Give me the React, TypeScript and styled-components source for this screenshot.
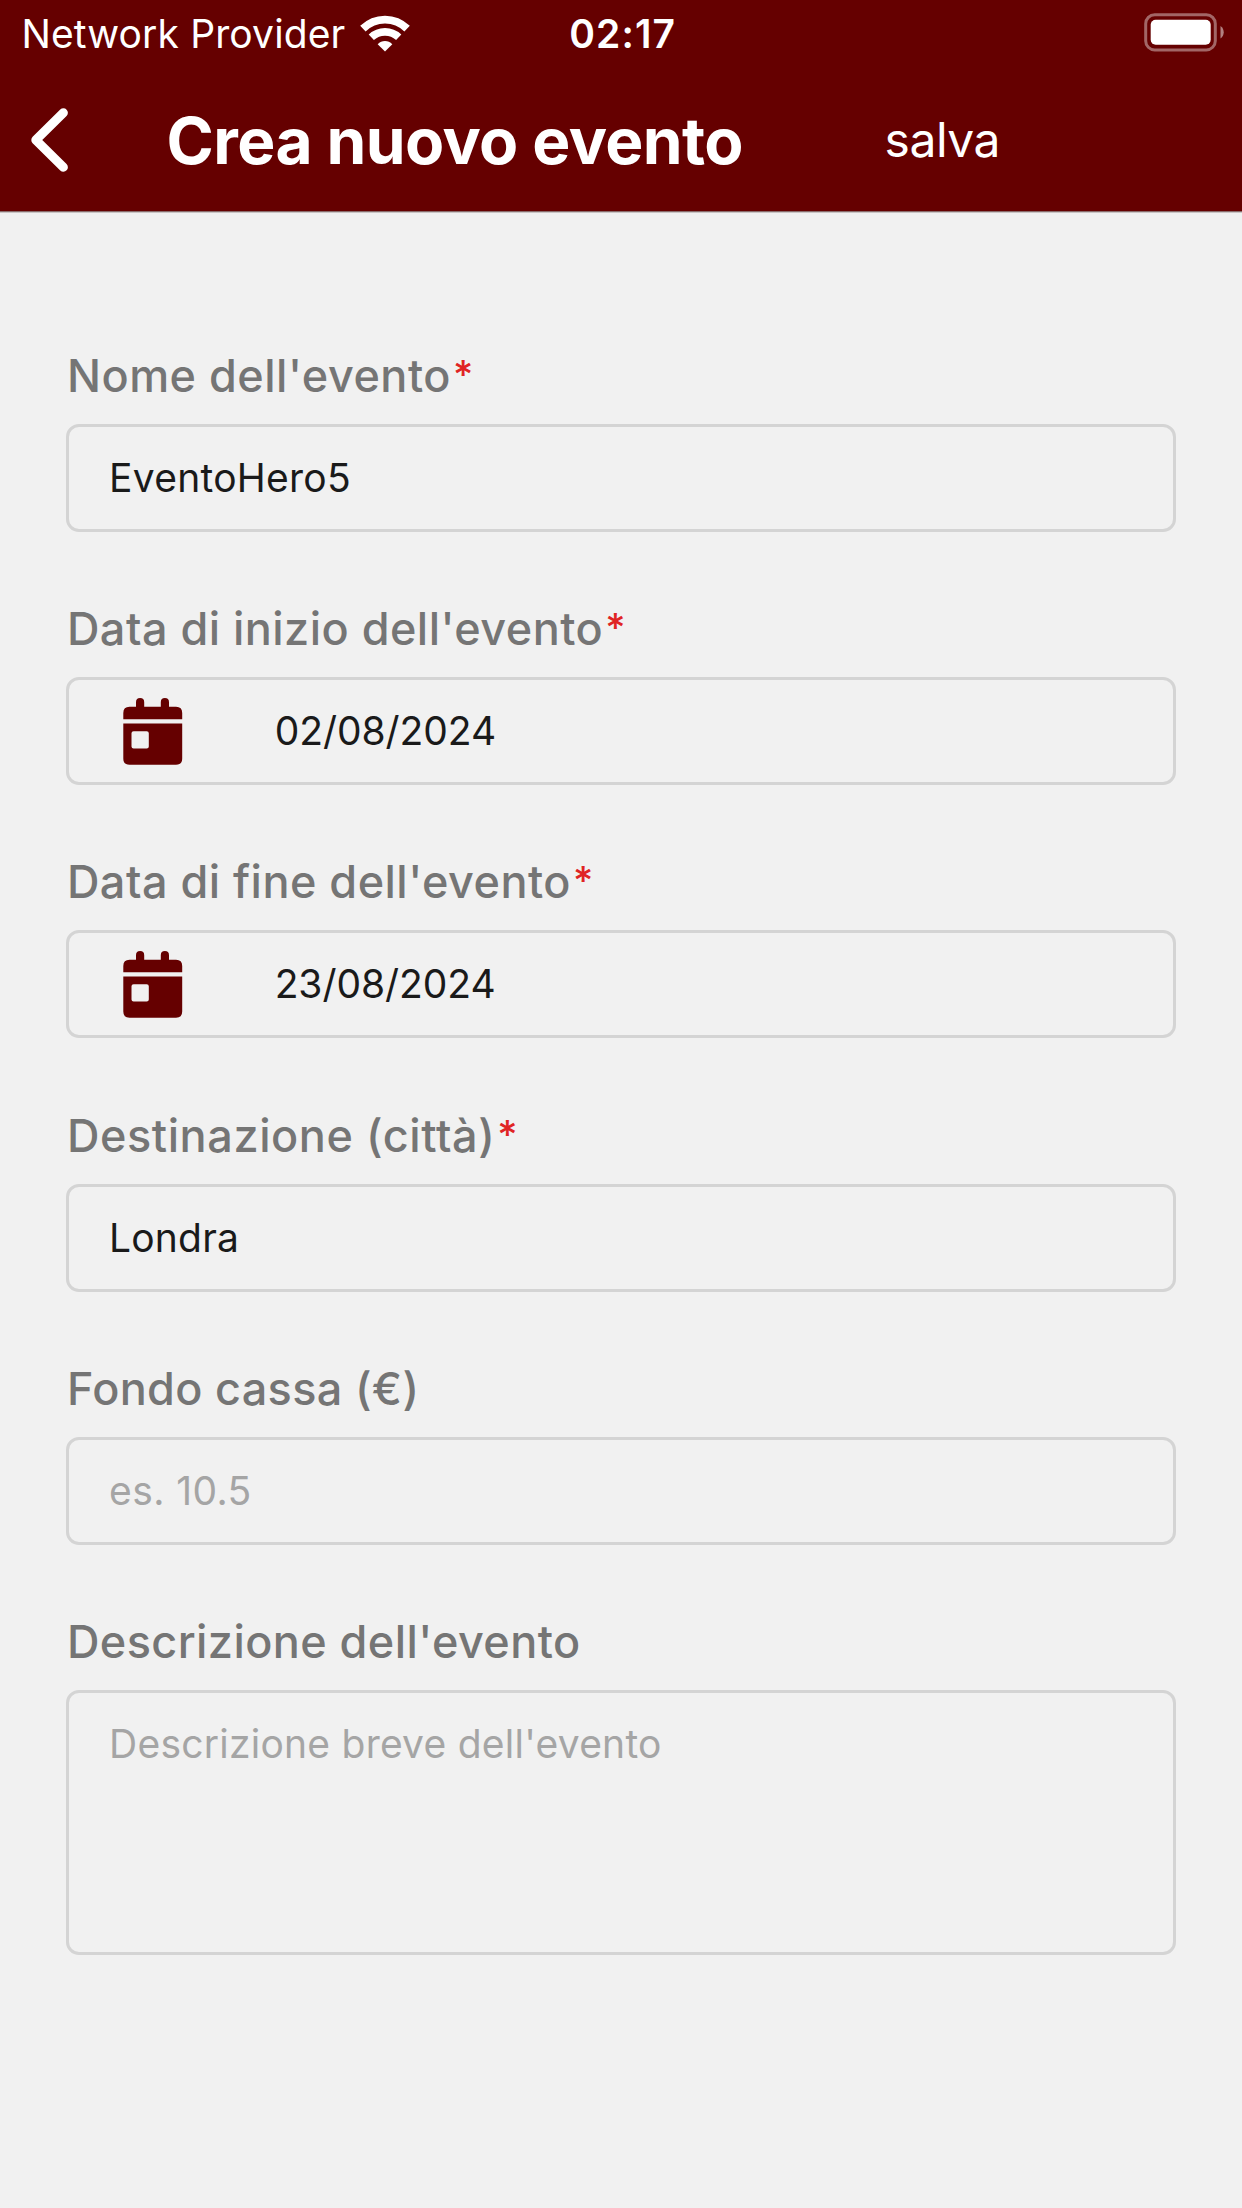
import React from "react";
import styled, { createGlobalStyle, css } from "styled-components";

const color = {
  brand: "#650000",
  page: "#f1f1f1",
  label: "#757575",
  text: "#1a1a1a",
  placeholder: "#a5a5a5",
  border: "#d4d4d4",
  required: "#e02424",
};

const GlobalStyle = createGlobalStyle`
  *, *::before, *::after { box-sizing: border-box; }
  body {
    margin: 0;
    background: ${color.page};
    font-family: Inter, "Liberation Sans", sans-serif;
    -webkit-font-smoothing: antialiased;
  }
`;

const Screen = styled.div`
  width: 1242px;
  min-height: 2208px;
  background: ${color.page};
`;

const Header = styled.header`
  height: 212px;
  background: ${color.brand};
  border-bottom: 1px solid #8a6c6c;
  box-shadow: 0 1px 0 #c9c5c5;
  color: #fff;
`;

const StatusBar = styled.div`
  display: grid;
  grid-template-columns: 1fr auto 1fr;
  align-items: center;
  height: 68px;
  padding: 0 18px 0 21.4px;
  font-size: 39px;
  line-height: 48px;
`;

const Carrier = styled.div`
  display: flex;
  align-items: center;
  gap: 15px;
  letter-spacing: 0.13px;
  white-space: nowrap;

  svg {
    margin-bottom: 1px;
  }
`;

const Clock = styled.time`
  font-weight: 600;
  letter-spacing: 1.1px;
`;

const BatterySlot = styled.div`
  display: flex;
  justify-content: flex-end;
  padding-bottom: 3px;
`;

const NavBar = styled.nav`
  display: flex;
  align-items: center;
  height: 143px;
  padding-left: 30px;
`;

const BackButton = styled.button`
  display: flex;
  width: 136.6px;
  padding: 0;
  border: 0;
  background: none;
`;

const Title = styled.h1`
  width: 718px;
  margin: 0;
  padding-top: 3px;
  font-size: 64px;
  font-weight: 700;
  line-height: 78px;
  letter-spacing: -0.6px;
  white-space: nowrap;
`;

const SaveButton = styled.button`
  padding: 0;
  border: 0;
  background: none;
  color: inherit;
  font: 400 48px/58px Inter, "Liberation Sans", sans-serif;
  letter-spacing: -0.5px;
`;

const Form = styled.form`
  display: flex;
  flex-direction: column;
  gap: 70.2px;
  padding: 137px 66.24px 0;
`;

const FieldGroup = styled.div`
  display: flex;
  flex-direction: column;
  gap: 21px;
`;

const Label = styled.label<{ $tracking: number }>`
  display: flex;
  height: 54px;
  padding-left: 0.7px;
  color: ${color.label};
  font-size: 45px;
  font-weight: 500;
  line-height: 54px;
  letter-spacing: ${(p) => p.$tracking}px;
  white-space: pre;
`;

const Required = styled.span`
  margin-left: 2px;
  color: ${color.required};
  font-size: 39px;
  font-weight: 500;
  line-height: 52px;
`;

const frame = css`
  border: 3px solid ${color.border};
  border-radius: 13px;
`;

const InputBox = styled.div`
  ${frame}
  display: flex;
  align-items: center;
  height: 108px;
  padding-left: 39.8px;
`;

const controlText = css<{ $tracking: number }>`
  border: 0;
  outline: 0;
  background: transparent;
  color: ${color.text};
  font: 400 39px/48px Inter, "Liberation Sans", sans-serif;
  letter-spacing: ${(p) => p.$tracking}px;

  &::placeholder {
    color: ${color.placeholder};
    opacity: 1;
  }
`;

const Input = styled.input<{ $tracking: number }>`
  ${controlText}
  flex: 1;
  min-width: 0;
  height: 48px;
  padding: 0;
`;

const TextArea = styled.textarea<{ $tracking: number }>`
  ${controlText}
  ${frame}
  display: block;
  height: 265px;
  padding: 26.6px 39.8px;
  resize: none;
`;

const CalendarSlot = styled.span`
  display: flex;
  width: 165.6px;
  padding-left: 13.6px;
  padding-top: 1px;
`;

const WifiIcon = () => (
  <svg width="50" height="37" viewBox="0 0 50 37" fill="none">
    <path d="M2.9 13.6C15.3 1.5 34.7 1.5 47.1 13.6" stroke="#fff" strokeWidth="7.8" />
    <path d="M11.3 22.3C19 15 31 15 38.7 22.3" stroke="#fff" strokeWidth="7.6" />
    <path d="M17.7 29.2C21.7 25 28.3 25 32.3 29.2L25 36.6Z" fill="#fff" />
  </svg>
);

const BatteryIcon = () => (
  <svg width="80" height="39" viewBox="0 0 80 39" fill="none">
    <rect x="1.7" y="1.7" width="69.6" height="35.2" rx="9" stroke="#fff" strokeOpacity=".4" strokeWidth="3" />
    <rect x="6.7" y="6.8" width="60" height="25" rx="5" fill="#fff" />
    <path d="M76.5 13C80.8 15.5 80.8 23 76.5 25.5Z" fill="#fff" fillOpacity=".5" />
  </svg>
);

const BackIcon = () => (
  <svg width="40" height="64" viewBox="0 0 40 64" fill="none">
    <path d="M33.4 4.8L5.8 32L33.4 59.2" stroke="#fff" strokeWidth="9" strokeLinecap="round" strokeLinejoin="round" />
  </svg>
);

const CalendarIcon = () => (
  <svg width="60" height="67" viewBox="0 0 60 67" fill={color.brand}>
    <path d="M.3 21.3V14.9Q.3 8.7 6.5 8.7H13V4.2a4.1 4.1 0 0 1 8.2 0V8.7H37.8V4.2a4.1 4.1 0 0 1 8.2 0V8.7H53Q59.2 8.7 59.2 14.9V21.3Z" />
    <path fillRule="evenodd" d="M.3 25.5H59.2V60.5Q59.2 66.7 53 66.7H6.5Q.3 66.7 .3 60.5ZM10.6 33.2Q8.5 33.2 8.5 35.3V48.4Q8.5 50.5 10.6 50.5H23.7Q25.8 50.5 25.8 48.4V35.3Q25.8 33.2 23.7 33.2Z" />
  </svg>
);

type Field = {
  id: string;
  label: string;
  labelTracking: number;
  tracking: number;
  required?: boolean;
  kind?: "date" | "multiline";
  value?: string;
  placeholder?: string;
};

const fields: Field[] = [
  { id: "nome", label: "Nome dell'evento", labelTracking: 0.5, tracking: 0.27, required: true, value: "EventoHero5" },
  { id: "inizio", label: "Data di inizio dell'evento", labelTracking: 0.47, tracking: -0.05, required: true, kind: "date", value: "02/08/2024" },
  { id: "fine", label: "Data di fine dell'evento", labelTracking: 0.47, tracking: -0.05, required: true, kind: "date", value: "23/08/2024" },
  { id: "citta", label: "Destinazione (città)", labelTracking: 0.58, tracking: 0.2, required: true, value: "Londra" },
  { id: "fondo", label: "Fondo cassa (€)", labelTracking: 0.32, tracking: 0.4, placeholder: "es. 10.5" },
  { id: "descrizione", label: "Descrizione dell'evento", labelTracking: 0.42, tracking: 0.24, kind: "multiline", placeholder: "Descrizione breve dell'evento" },
];

const FormField = ({ id, label, labelTracking, tracking, required, kind, value, placeholder }: Field) => (
  <FieldGroup>
    <Label htmlFor={id} $tracking={labelTracking}>
      {label}
      {required && <Required>*</Required>}
    </Label>
    {kind === "multiline" ? (
      <TextArea id={id} placeholder={placeholder} $tracking={tracking} />
    ) : (
      <InputBox>
        {kind === "date" && (
          <CalendarSlot>
            <CalendarIcon />
          </CalendarSlot>
        )}
        <Input id={id} defaultValue={value} placeholder={placeholder} spellCheck={false} $tracking={tracking} />
      </InputBox>
    )}
  </FieldGroup>
);

export default function App() {
  return (
    <>
      <GlobalStyle />
      <Screen>
        <Header>
          <StatusBar>
            <Carrier>
              Network Provider
              <WifiIcon />
            </Carrier>
            <Clock>02:17</Clock>
            <BatterySlot>
              <BatteryIcon />
            </BatterySlot>
          </StatusBar>
          <NavBar>
            <BackButton type="button" aria-label="Indietro">
              <BackIcon />
            </BackButton>
            <Title>Crea nuovo evento</Title>
            <SaveButton type="button">salva</SaveButton>
          </NavBar>
        </Header>
        <Form>
          {fields.map((field) => (
            <FormField key={field.id} {...field} />
          ))}
        </Form>
      </Screen>
    </>
  );
}
